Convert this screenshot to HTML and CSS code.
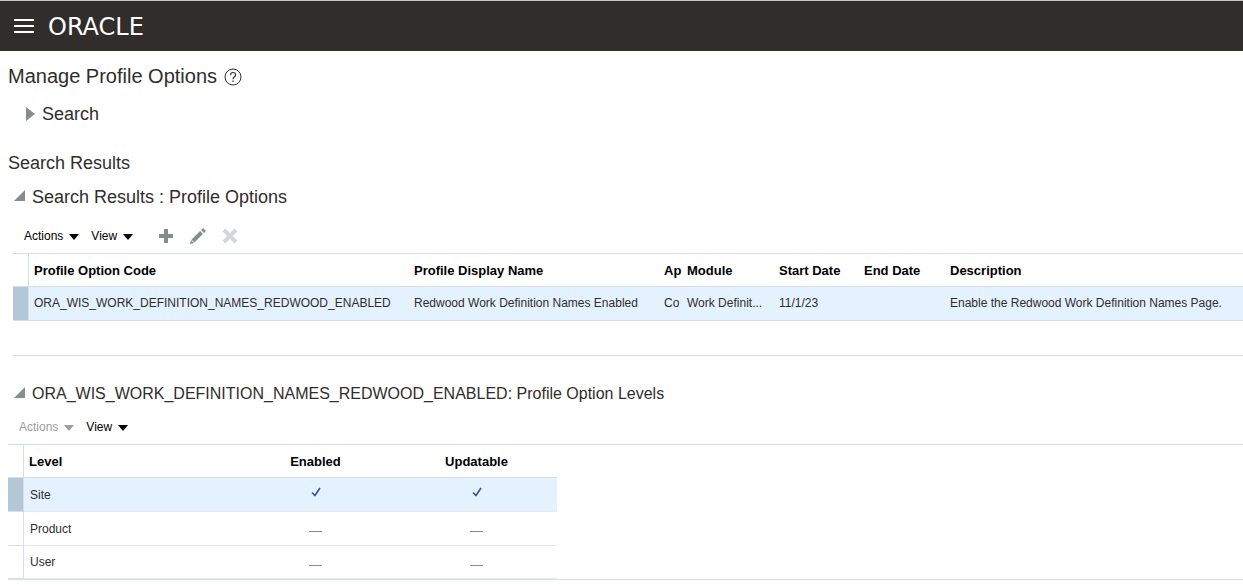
FILE: index.html
```html
<!DOCTYPE html>
<html lang="en">
<head>
    <meta charset="UTF-8">
    <meta name="viewport" content="width=device-width, initial-scale=1.0">
    <title>Manage Profile Options</title>
    <link rel="stylesheet" href="styles.css">
</head>
<body>

<header class="topbar">
    <button class="menu-btn" aria-label="Navigator">
        <svg width="20" height="14" viewBox="0 0 20 14"><path d="M0 1h20M0 7h20M0 13h20" stroke="#fff" stroke-width="2"/></svg>
    </button>
    <a class="logo" href="#">ORACLE</a>
</header>

<main>
    <div class="page-title">
        <h1>Manage Profile Options</h1>
        <button class="help-btn" aria-label="Help">
            <svg width="18" height="18" viewBox="0 0 18 18" fill="none" stroke="#312d2a">
                <circle cx="9" cy="9" r="8"/>
                <path d="M6.500 7.200C6.500 5.400 7.500 4.500 9 4.500s2.600 1 2.600 2.400C11.600 8.800 9 8.900 9 11.200M9 12.500v1.500" stroke-width="1.200"/>
            </svg>
        </button>
    </div>

    <button class="disclosure search-toggle" aria-expanded="false">
        <svg width="9" height="14" viewBox="0 0 9 14"><path d="M0 0l9 7-9 7z" fill="#868c90"/></svg>
        <span>Search</span>
    </button>

    <h2 class="results-title">Search Results</h2>

    <section class="options">
        <button class="disclosure" aria-expanded="true">
            <svg class="open" width="11" height="11" viewBox="0 0 11 11"><path d="M11 0v11H0z" fill="#868c90"/></svg>
            <span>Search Results : Profile Options</span>
        </button>
        <div class="toolbar">
            <button class="menu">Actions <i class="arrow"></i></button>
            <button class="menu">View <i class="arrow"></i></button>
            <div class="tools">
                <button aria-label="Add">
                    <svg width="16" height="16" viewBox="0 0 16 16"><path d="M8 1v14M1 8h14" stroke="#868c90" stroke-width="4"/></svg>
                </button>
                <button aria-label="Edit">
                    <svg width="16" height="16" viewBox="0 0 16 16"><path d="M0 16l1-4 3 3z" fill="#868c90"/><path d="M3 13l8.500-8.500M12.500 3.500l2-2" stroke="#868c90" stroke-width="4"/></svg>
                </button>
                <button aria-label="Delete" disabled>
                    <svg width="16" height="16" viewBox="0 0 16 16"><path d="M2 2l12 12M14 2L2 14" stroke="#d4d6d7" stroke-width="4"/></svg>
                </button>
            </div>
        </div>
        <div class="table-wrap">
            <table class="options-table">
                <colgroup>
                    <col class="c-select"><col class="c-code"><col class="c-name"><col class="c-app">
                    <col class="c-module"><col class="c-start"><col class="c-end"><col>
                </colgroup>
                <thead>
                    <tr>
                        <th class="select"></th>
                        <th>Profile Option Code</th>
                        <th>Profile Display Name</th>
                        <th>Ap</th>
                        <th>Module</th>
                        <th>Start Date</th>
                        <th>End Date</th>
                        <th>Description</th>
                    </tr>
                </thead>
                <tbody>
                    <tr class="selected">
                        <td class="select"></td>
                        <td>ORA_WIS_WORK_DEFINITION_NAMES_REDWOOD_ENABLED</td>
                        <td>Redwood Work Definition Names Enabled</td>
                        <td>Co</td>
                        <td>Work Definit...</td>
                        <td>11/1/23</td>
                        <td></td>
                        <td>Enable the Redwood Work Definition Names Page.</td>
                    </tr>
                </tbody>
            </table>
        </div>
    </section>

    <section class="levels">
        <button class="disclosure small" aria-expanded="true">
            <svg class="open" width="11" height="11" viewBox="0 0 11 11"><path d="M11 0v11H0z" fill="#868c90"/></svg>
            <span>ORA_WIS_WORK_DEFINITION_NAMES_REDWOOD_ENABLED: Profile Option Levels</span>
        </button>
        <div class="toolbar">
            <button class="menu" disabled>Actions <i class="arrow"></i></button>
            <button class="menu">View <i class="arrow"></i></button>
        </div>
        <div class="table-wrap">
            <table class="levels-table">
                <colgroup>
                    <col class="c-select"><col class="c-level"><col class="c-flag"><col class="c-flag">
                </colgroup>
                <thead>
                    <tr>
                        <th class="select"></th>
                        <th>Level</th>
                        <th class="flag">Enabled</th>
                        <th class="flag">Updatable</th>
                    </tr>
                </thead>
                <tbody>
                    <tr class="selected">
                        <td class="select"></td>
                        <td>Site</td>
                        <td class="flag"><svg class="check" width="10" height="10" viewBox="0 0 10 10"><path d="M1 5.500l3 3L9 1" fill="none" stroke="#3b4f8c" stroke-width="1.600"/></svg></td>
                        <td class="flag"><svg class="check" width="10" height="10" viewBox="0 0 10 10"><path d="M1 5.500l3 3L9 1" fill="none" stroke="#3b4f8c" stroke-width="1.600"/></svg></td>
                    </tr>
                    <tr>
                        <td class="select"></td>
                        <td>Product</td>
                        <td class="flag"><i class="dash"></i></td>
                        <td class="flag"><i class="dash"></i></td>
                    </tr>
                    <tr>
                        <td class="select"></td>
                        <td>User</td>
                        <td class="flag"><i class="dash"></i></td>
                        <td class="flag"><i class="dash"></i></td>
                    </tr>
                </tbody>
            </table>
        </div>
    </section>
</main>

</body>
</html>
```
FILE: styles.css
```css
* {
    box-sizing: border-box;
}
body {
    font-family: "Liberation Sans", Arial, sans-serif;
    font-size: 12px;
    margin: 0;
    background-color: #fff;
    color: #312d2a;
}
button {
    font: inherit;
    color: inherit;
    background: none;
    border: 0;
    padding: 0;
    cursor: pointer;
}
svg {
    display: block;
    flex: none;
}
h1, h2 {
    margin: 0;
    font-weight: normal;
}

/* Top bar */
.topbar {
    display: flex;
    align-items: center;
    gap: 14px;
    height: 51px;
    padding-left: 14px;
    border-top: 1px solid #c4c9c8;
    background-color: #312d2a;
}
.logo {
    padding-top: 2px;
    font-family: "DejaVu Sans", sans-serif;
    font-size: 24px;
    line-height: 28px;
    color: #fff;
    text-decoration: none;
}

/* Headings */
.page-title {
    display: flex;
    align-items: center;
    gap: 7px;
    padding: 13px 0 0 8px;
}
h1 {
    font-size: 20px;
    line-height: 24px;
}
.help-btn {
    padding-top: 2px;
}
.disclosure {
    display: flex;
    align-items: center;
    gap: 7px;
    padding-left: 14px;
    font-size: 18px;
    line-height: 24px;
}
.disclosure.small {
    font-size: 16px;
}
.disclosure .open {
    margin-bottom: 3px;
}
.search-toggle {
    margin-top: 14px;
    padding-left: 26px;
}
.results-title {
    margin: 25px 0 10px;
    padding-left: 8px;
    font-size: 18px;
    line-height: 24px;
}

/* Toolbars */
.toolbar {
    display: flex;
    align-items: center;
    gap: 12px;
    height: 34px;
    padding-left: 24px;
}
.menu {
    display: flex;
    align-items: center;
    gap: 6px;
    color: #000;
}
.menu:disabled {
    color: #9e9e9e;
}
.arrow {
    margin-top: 2px;
    border: 5px solid transparent;
    border-top: 6px solid;
    border-bottom: 0;
}
.tools {
    display: flex;
    gap: 16px;
    margin-left: 13px;
}

/* Tables */
.table-wrap {
    border-top: 1px solid #d6dfe6;
    border-bottom: 1px solid #d6dfe6;
}
table {
    table-layout: fixed;
    border-collapse: separate;
    border-spacing: 0;
}
th, td {
    padding: 0 0 0 5px;
    text-align: left;
    white-space: nowrap;
    overflow: hidden;
}
th {
    height: 33px;
    border-bottom: 1px solid #d6dfe6;
    font-size: 13px;
    color: #000;
}
td {
    height: 34px;
    border-bottom: 1px solid #e8ebed;
}
th.select, td.select {
    padding: 0;
    border-right: 1px solid #d6dfe6;
    border-bottom-color: #d6dfe6;
}
.selected td {
    background-color: #e4f1ff;
}
.selected td.select {
    background-color: #b4c7d6;
}
.c-select {
    width: 16px;
}

.options .toolbar {
    margin-top: 10px;
}
.options .table-wrap {
    margin-left: 13px;
    padding-bottom: 34px;
}
.options-table {
    width: 100%;
}
.options-table td {
    padding-bottom: 2px;
    border-bottom-color: #d6dce2;
}
.c-code {
    width: 380px;
}
.c-name {
    width: 250px;
}
.c-app {
    width: 23px;
}
.c-module {
    width: 92px;
}
.c-start {
    width: 85px;
}
.c-end {
    width: 86px;
}

.levels {
    margin-top: 26px;
}
.levels .toolbar {
    margin-top: 4px;
    padding-left: 19px;
}
.levels .table-wrap {
    margin-left: 8px;
}
.levels-table {
    width: 549px;
}
.c-flag {
    width: 161px;
}
.levels-table td {
    padding-left: 6px;
}
.levels-table tbody tr:last-child td {
    height: 33px;
}
.levels-table .flag {
    padding: 0;
    text-align: center;
}
.check {
    margin: 0 auto 6px;
}
.dash {
    display: block;
    width: 13px;
    margin: 6px auto 0;
    border-top: 1px solid #8a8a8a;
}
```
